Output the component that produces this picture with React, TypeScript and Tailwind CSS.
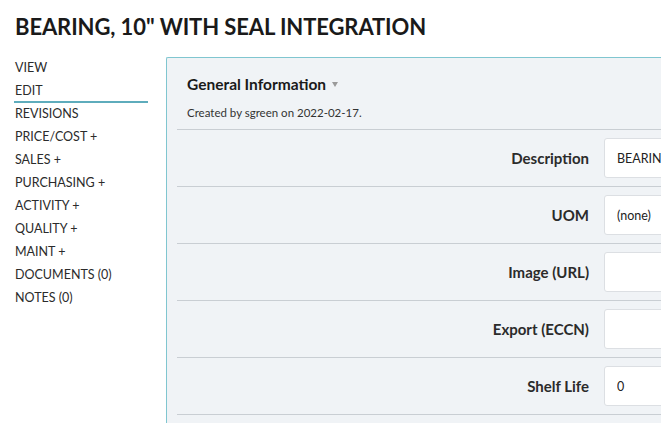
const navItems = [
  'VIEW',
  'EDIT',
  'REVISIONS',
  'PRICE/COST +',
  'SALES +',
  'PURCHASING +',
  'ACTIVITY +',
  'QUALITY +',
  'MAINT +',
  'DOCUMENTS (0)',
  'NOTES (0)',
];

const fields = [
  { label: 'Description', value: 'BEARING, 10" WITH SEAL INTEGRATION' },
  { label: 'UOM', value: '(none)' },
  { label: 'Image (URL)', value: '' },
  { label: 'Export (ECCN)', value: '' },
  { label: 'Shelf Life', value: '0' },
  { label: '', value: '' },
];

export default function App() {
  return (
    <div
      className="h-[423px] w-[661px] overflow-hidden bg-white text-[#222]"
      style={{ fontFamily: 'Lato, "Open Sans", sans-serif' }}
    >
      <div className="h-[56px] px-[15px] pt-[12px]">
        <h1 className="text-[22px] font-bold leading-[30px] tracking-[-0.1px] text-[#1a1a1a]">
          BEARING, 10" WITH SEAL INTEGRATION
        </h1>
      </div>

      <div className="flex">
        <nav className="w-[166px] shrink-0 pl-[14px] pr-[18px] pt-[1px]">
          {navItems.map((item) => (
            <div
              key={item}
              className={
                'flex h-[23px] items-center pl-[1px] text-[12.5px] text-[#2b2b2b] ' +
                (item === 'EDIT' ? 'shadow-[inset_0_-2px_0_#5eacbc]' : '')
              }
            >
              {item}
            </div>
          ))}
        </nav>

        <section className="mt-[1px] w-[640px] shrink-0 rounded-tl-[2px] border-l border-t border-[#80c6d0] bg-[#f0f3f6] px-[10px]">
          <div className="px-[10px] pb-[8px] pt-[15px]">
            <div className="flex items-center gap-[6px]">
              <span className="text-[15.5px] font-bold leading-[22px] text-[#1a1a1a]">
                General Information
              </span>
              <svg width="6" height="5" viewBox="0 0 6 5" className="mt-[1px]">
                <path d="M0 0h6L3 5z" fill="#9a9a9a" />
              </svg>
            </div>
            <p className="mt-[10px] text-[11.5px] leading-[16px] text-[#333]">
              Created by sgreen on 2022-02-17.
            </p>
          </div>

          {fields.map((f, i) => (
            <div
              key={i}
              className="flex h-[57px] items-center border-t border-[#c9ced3]"
            >
              <label className="w-[412px] shrink-0 text-right text-[15px] font-bold text-[#2b2b2b]">
                {f.label}
              </label>
              <input
                readOnly
                value={f.value}
                className="ml-[15px] h-[40px] w-[200px] rounded-[3px] border border-[#dcdfe3] bg-white px-[12px] text-[12.5px] text-[#222] outline-none"
                style={{ fontFamily: 'Lato, "Open Sans", sans-serif' }}
              />
            </div>
          ))}
        </section>
      </div>
    </div>
  );
}
